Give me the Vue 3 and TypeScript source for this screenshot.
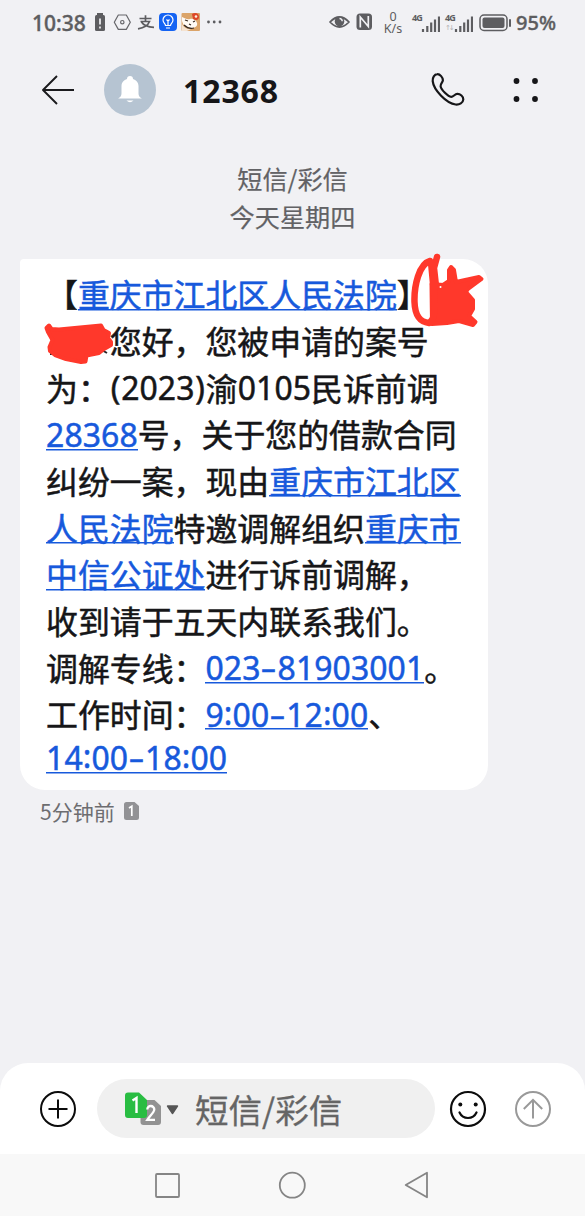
<script setup lang="ts">
type Kind = 'cjk' | 'num' | 'paren' | 'indent'
interface Piece {
  text: string
  kind: Kind
}
interface Run {
  link?: boolean
  pieces: Piece[]
}

const c = (text: string): Piece => ({ text, kind: 'cjk' })
const n = (text: string): Piece => ({ text, kind: 'num' })
const p = (text: string): Piece => ({ text, kind: 'paren' })
const indent: Piece = { text: '', kind: 'indent' }

const lines: Run[][] = [
  [{ pieces: [c('【')] }, { link: true, pieces: [c('重庆市江北区人民法院')] }, { pieces: [c('】')] }],
  [{ pieces: [indent, c('您好，您被申请的案号')] }],
  [{ pieces: [c('为：'), p('('), n('2023'), p(')'), c('渝'), n('0105'), c('民诉前调')] }],
  [{ link: true, pieces: [n('28368')] }, { pieces: [c('号，关于您的借款合同')] }],
  [{ pieces: [c('纠纷一案，现由')] }, { link: true, pieces: [c('重庆市江北区')] }],
  [{ link: true, pieces: [c('人民法院')] }, { pieces: [c('特邀调解组织')] }, { link: true, pieces: [c('重庆市')] }],
  [{ link: true, pieces: [c('中信公证处')] }, { pieces: [c('进行诉前调解，')] }],
  [{ pieces: [c('收到请于五天内联系我们。')] }],
  [{ pieces: [c('调解专线：')] }, { link: true, pieces: [n('023-81903001')] }, { pieces: [c('。')] }],
  [{ pieces: [c('工作时间：')] }, { link: true, pieces: [n('9:00-12:00')] }, { pieces: [c('、')] }],
  [{ link: true, pieces: [n('14:00-18:00')] }],
]

const glyphs = (piece: Piece): string[] => (piece.kind === 'num' ? [...piece.text] : [piece.text])
const glyphClass = (piece: Piece, g: string): string => {
  if (g === '-') return 'hyphen'
  if (g === ':') return 'colon'
  return piece.kind
}
</script>

<template>
  <div class="phone">
    <div class="status">
      <span class="clock">10:38</span>
      <svg class="s-left" width="135" height="30" viewBox="90 8 135 30">
        <rect x="97" y="13" width="6" height="3" fill="#5d5d60" />
        <rect x="95" y="15" width="10" height="16" rx="1.5" fill="#5d5d60" />
        <path d="M100 18.500v6M100 26.500v2" stroke="#f1f1f4" stroke-width="1.700" />
        <path d="M118.300 15h8l4 7.200-4 7.200h-8l-4-7.200z" fill="none" stroke="#66666a" stroke-width="1.200" stroke-linejoin="round" />
        <circle cx="122.300" cy="22.200" r="1.700" fill="none" stroke="#66666a" stroke-width="1.200" />
        <path d="M139.500 18.500h12M145.500 15.200v6M140.500 21.500h9c-1.500 4-5 6.200-11.500 7.300M141.500 22c2 3.300 6 5 12.500 5.300" fill="none" stroke="#5d5d60" stroke-width="1.700" />
        <rect x="159" y="13" width="18" height="18" rx="4" fill="#1463f3" />
        <path d="M165.500 25.500c0-2-2.500-2.500-2.500-5.500a5 5 0 0 1 10 0c0 3-2.500 3.500-2.500 5.500zM166 28h4M168 25v-4l-1.500-1.500M168 21l1.500-1.500" fill="none" stroke="#fff" stroke-width="1.200" />
        <rect x="181.500" y="13" width="18.500" height="18" rx="1" fill="#dba469" />
        <path d="M182 17c3 1 5 3 8 2 3-1 6 1 7 4 1 3-2 5-6 5-5 1-8-3-9-7z" fill="#fffaf4" />
        <path d="M182 24c2 4 5 5 9 5l-4 2h-5z" fill="#f5e3d1" />
        <path d="M192 14c3-2 7-1 7 3 0 3-3 4-6 2z" fill="#dc4628" />
        <circle cx="196" cy="16.500" r="1.300" fill="#fff0dd" />
        <path d="M185 20l3 1M193 22l2-1M189 24l2 1M184 25c3 3 6 4 10 3" fill="none" stroke="#362921" stroke-width="1.200" />
        <g fill="#5d5d60"><circle cx="208.500" cy="22" r="1.400" /><circle cx="214.200" cy="22" r="1.400" /><circle cx="220" cy="22" r="1.400" /></g>
      </svg>
      <svg class="s-mid" width="48" height="30" viewBox="328 8 48 30">
        <path d="M330 22q9.500-10 19 0q-9.500 10-19 0z" fill="none" stroke="#5d5d60" stroke-width="1.800" stroke-linejoin="round" />
        <circle cx="339.500" cy="21.500" r="4.800" fill="#5d5d60" />
        <path d="M339.500 18.500a2.700 2.700 0 0 1 2.700 2.700" stroke="#f1f1f4" stroke-width="1.500" fill="none" />
        <rect x="356.500" y="13.500" width="15.500" height="16.500" rx="3.500" fill="#5d5d60" />
        <path d="M360.300 27.500V17l8 9.500V16" fill="none" stroke="#f1f1f4" stroke-width="1.700" />
      </svg>
      <div class="speed"><span>0</span><span>K/s</span></div>
      <div class="signal">
        <span>4G</span>
        <svg width="20" height="18" viewBox="0 0 20 18"><path d="M3 17v-3M7.300 17V11M11.200 17V7.500M15 17V4.500M19 17V1.500" stroke="#5d5d60" stroke-width="2.200" /></svg>
      </div>
      <div class="signal second">
        <span>4G</span>
        <svg width="20" height="18" viewBox="0 0 20 18"><path d="M3 17v-3M7.300 17V11M11.200 17V7.500M15 17V4.500M19 17V1.500" stroke="#5d5d60" stroke-width="2.200" /></svg>
        <i>↑↓</i>
      </div>
      <svg class="battery" width="34" height="20" viewBox="0 0 34 20">
        <rect x="1" y="2" width="27" height="15.500" rx="4" fill="none" stroke="#5d5d60" stroke-width="1.500" />
        <rect x="3.500" y="4.500" width="22" height="10.500" rx="2" fill="#5d5d60" />
        <path d="M31 7v6" stroke="#5d5d60" stroke-width="2" stroke-linecap="round" />
      </svg>
      <span class="percent">95%</span>
    </div>

    <header class="header">
      <svg class="back" width="34" height="32" viewBox="0 0 34 32">
        <path d="M16 2L2 16l14 14M2 16h31" fill="none" stroke="#1b1b1d" stroke-width="1.900" stroke-linejoin="round" />
      </svg>
      <div class="avatar">
        <svg width="26" height="28" viewBox="0 0 26 28">
          <path d="M1 22.500c3-1.500 3.500-3 3.500-6V10c0-3.500 2.500-6 5.500-7a3 3 0 0 1 6 0c3 1 5.500 3.500 5.500 7v6.500c0 3 .5 4.500 3.500 6z" fill="#fff" />
          <path d="M9.500 24.500h7q-3.500 3.500-7 0z" fill="#fff" />
        </svg>
      </div>
      <h1>12368</h1>
      <svg class="call" width="36" height="36" viewBox="0 0 36 36">
        <path d="M2.700 9.200C2.300 5.500 4.500 2.300 7.200 2.200C10 2 13 5.500 12.900 8.300C12.800 10.500 10.200 11.800 10.600 14.300C11.200 17.700 18 24.700 21.200 24.900C23.400 25 24.700 22 27.300 21.900C30.200 21.800 33.500 24.500 33.300 27.500C33.100 30.700 29.500 32.900 25.600 32.500C16.500 31.500 3.600 18 2.700 9.200Z" fill="none" stroke="#161618" stroke-width="2.200" />
      </svg>
      <svg class="more" width="26" height="26" viewBox="0 0 26 26" fill="#161618">
        <circle cx="3.500" cy="4" r="2.900" /><circle cx="22" cy="4" r="2.900" /><circle cx="3.500" cy="22" r="2.900" /><circle cx="22" cy="22" r="2.900" />
      </svg>
    </header>

    <main class="thread">
      <div class="day"><div>短信/彩信</div><div>今天星期四</div></div>
      <article class="bubble">
        <div v-for="(line, i) in lines" :key="i" class="line">
          <span v-for="(run, j) in line" :key="j" class="run" :class="{ link: run.link }">
            <template v-for="(piece, k) in run.pieces" :key="k"><span v-for="(g, m) in glyphs(piece)" :key="m" :class="glyphClass(piece, g)">{{ g }}</span></template>
          </span>
        </div>
        <svg class="marks" width="470" height="130" viewBox="20 250 470 130">
          <path d="M51 349v6M100 349l7 4M104 345l4 3" stroke="#252527" stroke-width="2" />
          <g fill="#ff382b" stroke="#ff382b" stroke-width="4" stroke-linejoin="round" stroke-linecap="round">
            <path d="M46.500 328L49 325.500L51.500 329L59 329.500L101 325.500L103.500 330L109 333L108 338L111 342V345L104 349L99 353L86.500 355.500L85.500 361.500L81 362L66 359L55 355L50 351L49.500 347L52.500 340L48 332Z" />
            <path d="M431.500 284L443 285L449 281V270L451 267L454 270L456 282L479 277L481.500 279L468 289L466 292L473 300V309L469 316L475.500 322L473 325L459 321L447 323L432 324Z" />
          </g>
          <path d="M437 257L434 268L436 286M430 261C419 264 414 286 414.500 302C415 316 420 322 429 323C437 319 435 298 433 283L431 262" fill="none" stroke="#ff382b" stroke-width="6.500" stroke-linecap="round" stroke-linejoin="round" />
          <circle cx="440.500" cy="287" r="1" fill="#fff" />
        </svg>
      </article>
      <div class="meta">
        <span>5分钟前</span>
        <svg width="15" height="18" viewBox="0 0 15 18">
          <path d="M2.500 0h8L15 4v11.500a2.500 2.500 0 0 1-2.500 2.500h-10A2.500 2.500 0 0 1 0 15.500v-13A2.500 2.500 0 0 1 2.500 0z" fill="#929295" />
          <path d="M5 6l2.800-1.800V14" fill="none" stroke="#fff" stroke-width="1.700" />
        </svg>
      </div>
    </main>

    <footer class="composer">
      <svg class="plus" width="38" height="38" viewBox="0 0 38 38">
        <circle cx="19" cy="19" r="17" fill="none" stroke="#0c0c0c" stroke-width="2" />
        <path d="M19 9.500v19M9.500 19h19" stroke="#0c0c0c" stroke-width="2" />
      </svg>
      <div class="field">
        <svg width="55" height="36" viewBox="0 0 55 36">
          <path d="M17.500 9h12L36 15v16a3 3 0 0 1-3 3H18.500a3 3 0 0 1-3-3V11a2 2 0 0 1 2-2z" fill="#929292" />
          <path d="M3 1.500h11L22 9v15a3 3 0 0 1-3 3H3a3 3 0 0 1-3-3V4.500a3 3 0 0 1 3-3z" fill="#29bd42" />
          <path d="M7.500 9.500l4-2.500V22" fill="none" stroke="#fff" stroke-width="2.400" />
          <path d="M22.300 18.500c0-5 7.200-4.300 7 0c-.2 3-4.500 6.500-7 10.300h7.700" fill="none" stroke="#fff" stroke-width="2.300" />
          <path d="M42.500 15h10l-5 7.500z" fill="#555" stroke="#555" stroke-width="1.400" stroke-linejoin="round" />
        </svg>
        <span>短信/彩信</span>
      </div>
      <svg class="smile" width="38" height="38" viewBox="0 0 38 38">
        <circle cx="19" cy="19" r="17" fill="none" stroke="#0c0c0c" stroke-width="2.200" />
        <circle cx="11.300" cy="14.500" r="2" fill="#0c0c0c" /><circle cx="26.700" cy="14.500" r="2" fill="#0c0c0c" />
        <path d="M10.500 22.500c3.500 7.300 13.500 7.300 17 0" fill="none" stroke="#0c0c0c" stroke-width="2.200" stroke-linecap="round" />
      </svg>
      <svg class="send" width="38" height="38" viewBox="0 0 38 38">
        <circle cx="19" cy="19" r="17" fill="none" stroke="#999" stroke-width="2" />
        <path d="M19 28.500V10M9.800 19L19 9.800L28.200 19" fill="none" stroke="#999" stroke-width="2" />
      </svg>
    </footer>

    <nav class="nav">
      <svg width="585" height="62" viewBox="0 0 585 62" fill="none" stroke="#858585" stroke-width="1.800" stroke-linejoin="round">
        <rect x="156" y="20" width="23" height="23" rx="1" />
        <circle cx="292.300" cy="31.200" r="12.500" />
        <path d="M405.700 31L427 18.700V43.300Z" />
      </svg>
    </nav>
  </div>
</template>

<style>
html,
body {
  margin: 0;
  background: #f1f1f4;
}
</style>

<style scoped>
.phone {
  width: 585px;
  height: 1216px;
  display: flex;
  flex-direction: column;
  overflow: hidden;
  background: #f1f1f4;
  color: #161618;
  font-family: "Noto Sans", "Noto Sans CJK SC", sans-serif;
}
svg {
  display: block;
  flex: none;
}
.status {
  height: 45px;
  display: flex;
  align-items: center;
  color: #5d5d60;
  flex: none;
  white-space: nowrap;
}
.clock {
  width: 58px;
  margin-left: 32px;
  font-size: 21px;
  font-weight: 500;
  -webkit-text-stroke: 0.4px currentColor;
}
.s-mid {
  margin-left: 103px;
}
.speed {
  width: 24px;
  margin-left: 5px;
  display: flex;
  flex-direction: column;
  align-items: center;
  font-size: 12.5px;
  line-height: 12px;
}
.signal {
  width: 28px;
  height: 20px;
  margin-left: 7px;
  position: relative;
  display: flex;
  justify-content: flex-end;
  align-items: flex-end;
}
.signal.second {
  margin-left: 5px;
}
.signal span {
  position: absolute;
  left: 0;
  top: 0;
  font-size: 9px;
  line-height: 9px;
  font-weight: 700;
  letter-spacing: -1px;
}
.signal i {
  position: absolute;
  left: 0;
  top: 11px;
  font: 7px/8px "DejaVu Sans", sans-serif;
  letter-spacing: -2px;
  color: #b0b0b3;
}
.battery {
  margin-left: 6px;
}
.percent {
  margin-left: 3px;
  font-size: 20px;
  font-weight: 500;
  -webkit-text-stroke: 0.4px currentColor;
}
.header {
  height: 90px;
  display: flex;
  align-items: center;
  flex: none;
}
.back {
  margin-left: 41px;
}
.avatar {
  width: 52px;
  height: 52px;
  margin-left: 29px;
  border-radius: 50%;
  background: #b6c4d2;
  display: flex;
  align-items: center;
  justify-content: center;
}
h1 {
  width: 100px;
  margin: 2px 0 0 27px;
  font-size: 32px;
  line-height: 40px;
  font-weight: 700;
  letter-spacing: 0.9px;
}
.call {
  margin-left: 147px;
}
.more {
  margin-left: 47px;
}
.thread {
  flex: 1;
  padding: 25px 20px 0;
}
.day {
  height: 99px;
  text-align: center;
  font-family: "Noto Sans CJK SC", sans-serif;
  font-size: 25.2px;
  line-height: 37.5px;
  color: #626265;
  -webkit-text-stroke: 0.2px currentColor;
}
.bubble {
  position: relative;
  width: 468px;
  height: 531px;
  box-sizing: border-box;
  padding: 12.7px 0 0 26px;
  border-radius: 4px 25px 25px 25px;
  background: #fff;
}
.line {
  height: 43.35px;
  padding-top: 3.3px;
  display: flex;
  white-space: pre;
  font-size: 31.9px;
  line-height: 40px;
}
.line:nth-child(11) {
  margin-top: -3.5px;
}
.run {
  display: flex;
  height: 40px;
  -webkit-text-stroke: 0.5px currentColor;
}
.link {
  color: #1759dc;
  background: linear-gradient(#1759dc, #1759dc) 0 33.7px / 100% 1.5px no-repeat;
}
.cjk {
  font-family: "Noto Sans CJK SC", sans-serif;
  margin-top: -1.5px;
}
.indent {
  width: 63.8px;
}
.num {
  width: 18.35px;
  text-align: center;
}
.paren {
  width: 11.3px;
  text-align: center;
}
.colon {
  width: 8.7px;
  text-align: center;
  transform: translateY(-2px);
}
.hyphen {
  width: 17px;
  text-align: center;
  transform: scaleX(1.55);
}
.marks {
  position: absolute;
  left: 0;
  top: -9px;
}
.meta {
  display: flex;
  align-items: center;
  gap: 9px;
  height: 30px;
  margin: 6px 0 0 20px;
  font-family: "Noto Sans CJK SC", sans-serif;
  font-size: 21px;
  line-height: 30px;
  color: #6d6d70;
}
.composer {
  height: 91px;
  display: flex;
  align-items: center;
  flex: none;
  border-radius: 28px 28px 0 0;
  background: #fff;
}
.plus {
  margin-left: 39px;
}
.field {
  width: 338px;
  height: 59px;
  margin-left: 20px;
  box-sizing: border-box;
  padding-left: 28px;
  border-radius: 30px;
  background: #f0f0f0;
  display: flex;
  align-items: center;
  gap: 15px;
  font-family: "Noto Sans CJK SC", sans-serif;
  font-size: 33.5px;
  line-height: 50px;
  color: #656565;
  -webkit-text-stroke: 0.3px currentColor;
}
.smile {
  margin-left: 14px;
}
.send {
  margin-left: 27px;
}
.nav {
  height: 62px;
  flex: none;
  background: #f8f8f8;
}
</style>
